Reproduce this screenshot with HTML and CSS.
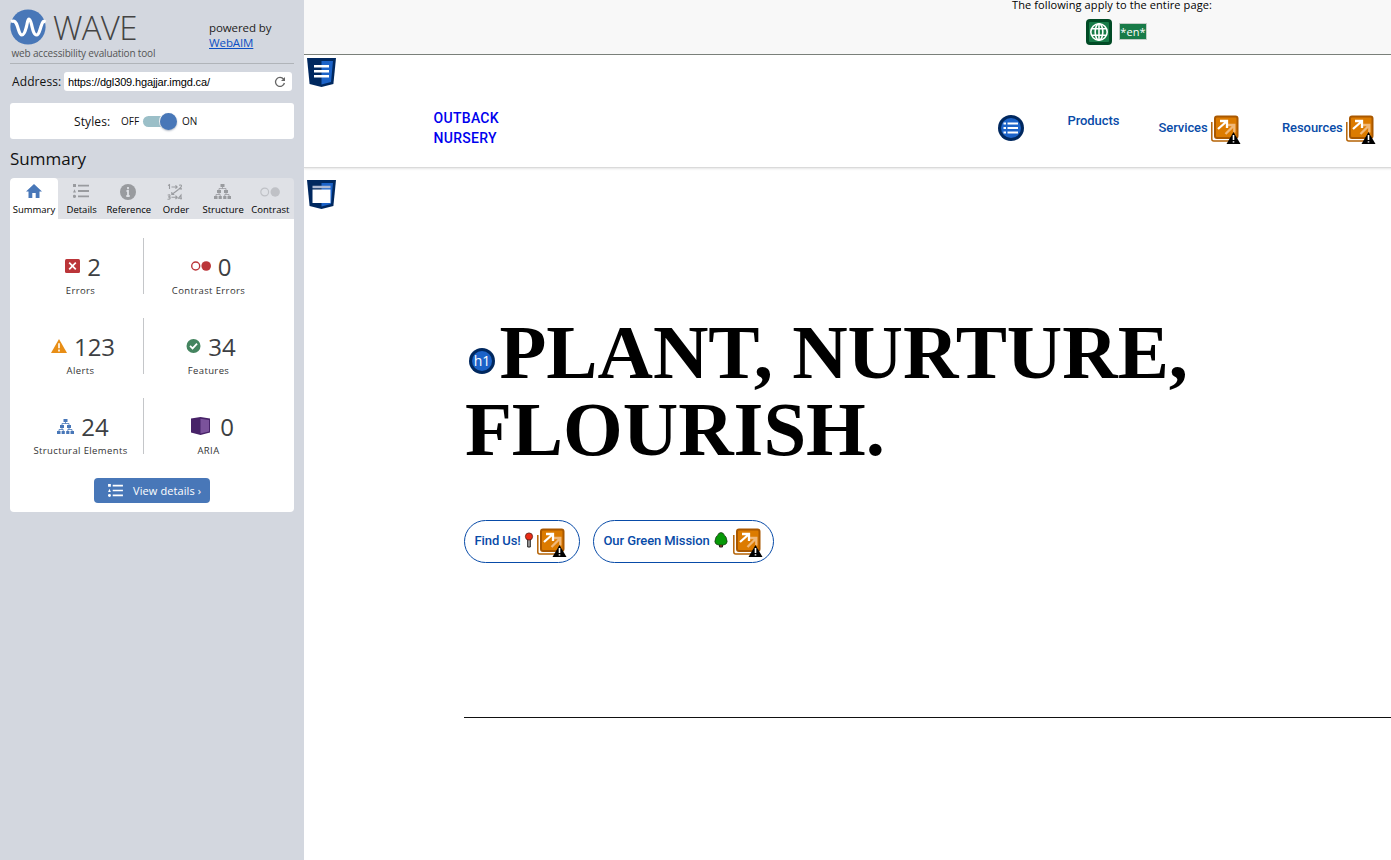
FILE: index.html
```html
<!DOCTYPE html>
<html lang="en">
<head>
<meta charset="utf-8">
<title>WAVE Report</title>
<link rel="stylesheet" href="styles.css">
</head>
<body>
<svg class="defs" aria-hidden="true">
  <symbol id="list" viewBox="0 0 16 14">
    <path d="M0 0h3v3H0zM0 8.5 1.5 5.2 3 8.5zM5 .8h11v1.8H5zM5 6.1h11v1.8H5zM5 11.4h11v1.8H5z"/><circle cx="1.5" cy="12.3" r="1.6"/>
  </symbol>
  <symbol id="tree" viewBox="0 0 17 15">
    <path d="M6.5 0h4v3h-4zM3 6h4v3H3zM10 6h4v3h-4zM0 12h3.5v3H0zM4.6 12h3.2v3H4.6zM9.2 12h3.2v3H9.2zM13.5 12H17v3h-3.500z"/>
    <path d="M8.500 3v1.500M5 6V4.500h7V6M5 9v1.500M2 12v-1.500h4.200V12M12 9v1.500M10.800 12v-1.500H15V12" fill="none" stroke="currentColor" stroke-width=".8"/>
  </symbol>
  <symbol id="possible-link" viewBox="0 0 30 30">
    <path d="M.8 7v17q0 2 2 2H22" fill="none" stroke="#b56305" stroke-width="1.500"/>
    <rect x="4" y="1.500" width="22.500" height="21.500" rx="2" fill="#dc7b00" stroke="#a95800" stroke-width="2"/>
    <path d="m14.500 19 8.500-8.500M16 10h7.300v7.500" fill="none" stroke="#f0b879" stroke-width="2.300"/>
    <path d="m7 14 8.500-7.500M9 6h7v7" fill="none" stroke="#fff" stroke-width="2.300"/>
    <path d="m22.500 17 7 12h-14z" fill="#000"/>
    <path d="M22.500 20v5M22.500 26.200v1.400" stroke="#fff" stroke-width="1.600"/>
  </symbol>
  <symbol id="shield" viewBox="0 0 29 29">
    <path d="M0 0h29l-2.600 26L14.500 29 2.600 26z" fill="#00285f"/>
    <path d="M14.500 3H26l-2 21-9.500 2.500z" fill="#1c63c8"/>
  </symbol>
</svg>

<div class="app">
<aside class="sidebar">
  <header class="brand">
    <div class="brand-main">
      <div class="logo">
        <svg class="logo-mark" viewBox="0 0 36 36"><circle cx="18" cy="18" r="17.600" fill="#4877b8"/><path d="M1 12.500C4.500 11 6 13 7.500 17.500S9.500 26 12 26s3.500-5 4.500-8.500S17.500 10 19 10s2 3.500 3 7.500 2 8.500 4.500 8.500 3-4 4.500-8.500 2-6 4.500-4.500" fill="none" stroke="#fff" stroke-width="3.200"/></svg>
        <span class="logo-word">WAVE</span>
      </div>
      <div class="tagline">web accessibility evaluation tool</div>
    </div>
    <div class="powered">powered by<br><a>WebAIM</a></div>
  </header>
  <div class="address">
    <span class="address-label">Address:</span>
    <div class="address-field"><span>https://dgl309.hgajjar.imgd.ca/</span>
      <svg class="reload" viewBox="0 0 12 12"><path d="M9.600 3.200A4.500 4.500 0 1 0 10.400 7" fill="none" stroke="#666" stroke-width="1.300"/><path d="M11 1v4H7z" fill="#666"/></svg>
    </div>
  </div>
  <div class="styles-box">
    <span class="styles-label">Styles:</span><span class="off">OFF</span><span class="toggle"><i class="knob"></i></span><span class="on">ON</span>
  </div>
  <h2 class="panel-title">Summary</h2>
  <nav class="tabs">
    <div class="tab tab-active"><svg class="tab-icon home" viewBox="0 0 16 14"><path d="M8 0 16 7.500h-2.500V14H9.700V9H6.300v5H2.500V7.500H0z"/></svg><span class="t-summary">Summary</span></div>
    <div class="tab"><svg class="tab-icon list-icon"><use href="#list"/></svg><span class="t-details">Details</span></div>
    <div class="tab"><svg class="tab-icon info" viewBox="0 0 16 16"><circle cx="8" cy="8" r="8"/><path d="M8 3v2.300M6.500 7H8v5M6.300 12h3.400" fill="none" stroke="#dfe1e6" stroke-width="1.800"/></svg><span class="t-reference">Reference</span></div>
    <div class="tab"><svg class="tab-icon order" viewBox="0 0 16 16"><g fill="none" stroke="currentColor" stroke-width="1.100"><path d="M1 1.500 2.500.700V5M12 1.300q2.500-1 2.500.800Q14.500 3 12 4.900h3M.700 11.200q2.300-1 2.300.500t-1.800 1.200q2.200 0 2 1.300t-2.700 1M14 15.500V11l-2.500 3.200H15M4.500 3h5.500M8.500 1.300 10.200 3 8.500 4.700M4.500 13.300h5.500M8.500 11.600l1.700 1.700-1.700 1.700M11.500 5.500 4.800 10.500M4.800 8v2.500h2.500"/></g></svg><span class="t-order">Order</span></div>
    <div class="tab"><svg class="tab-icon tree-icon"><use href="#tree"/></svg><span class="t-structure">Structure</span></div>
    <div class="tab"><svg class="tab-icon contrast" viewBox="0 0 20 10"><circle cx="4.700" cy="5" r="3.900" fill="none" stroke="#bfc1c6" stroke-width="1.200"/><circle cx="15.200" cy="5" r="4.700" fill="#bfc1c6"/></svg><span class="t-contrast">Contrast</span></div>
  </nav>
  <section class="panel">
    <div class="stats">
      <div class="stat"><div class="figure"><svg class="i-error" viewBox="0 0 15 14"><rect width="15" height="14" rx="1.500" fill="#bb3539"/><path d="m4.200 3.700 6.600 6.600m0-6.600-6.600 6.600" stroke="#fff" stroke-width="1.700"/></svg><b>2</b></div><div class="label">Errors</div></div>
      <div class="stat"><div class="figure"><svg class="i-contrast" viewBox="0 0 20 10"><circle cx="4.700" cy="5" r="4" fill="none" stroke="#bb3539" stroke-width="1.400"/><circle cx="15.200" cy="5" r="4.800" fill="#bb3539"/></svg><b>0</b></div><div class="label">Contrast Errors</div></div>
      <div class="stat"><div class="figure"><svg class="i-alert" viewBox="0 0 16 14"><path d="m8 0 8 14H0z" fill="#e88e16"/><path d="M8 4.200v5M8 10.500v2" stroke="#fff" stroke-width="1.600"/></svg><b>123</b></div><div class="label">Alerts</div></div>
      <div class="stat"><div class="figure"><svg class="i-feature" viewBox="0 0 15 15"><circle cx="7.500" cy="7.500" r="7.500" fill="#44845f"/><path d="m3.800 7.400 2.700 2.700L11.300 5" fill="none" stroke="#fff" stroke-width="1.900"/></svg><b>34</b></div><div class="label">Features</div></div>
      <div class="stat"><div class="figure"><svg class="i-tree"><use href="#tree"/></svg><b>24</b></div><div class="label">Structural Elements</div></div>
      <div class="stat"><div class="figure figure-aria"><svg class="i-aria" viewBox="0 0 19 18"><path d="M0 1.500 9.500 0 19 1.500v14L9.500 18 0 15.500z" fill="#472268"/><path d="M9.500 1.800 18 3v11.500l-8.500 2z" fill="#7b529b"/></svg><b>0</b></div><div class="label">ARIA</div></div>
    </div>
    <div class="details-button"><svg class="button-icon"><use href="#list"/></svg><span>View details ›</span></div>
  </section>
</aside>

<div class="viewport">
 <div class="page">
  <div class="page-notes">
    <div class="notes-title">The following apply to the entire page:</div>
    <div class="notes-row">
      <svg class="globe" viewBox="0 0 26 26"><rect width="26" height="26" rx="4" fill="#004a25"/><rect x="3" y="3" width="20" height="20" rx="1" fill="#187b48"/><g fill="none" stroke="#fff" stroke-width="1.600"><circle cx="13" cy="13" r="8.200"/><ellipse cx="13" cy="13" rx="3.800" ry="8.200"/><path d="M13 5v16M5.500 9.700h15M5.500 16.300h15"/></g></svg>
      <span class="lang">*en*</span>
    </div>
  </div>
  <header class="site-header">
    <svg class="region-icon" viewBox="0 0 29 29"><use href="#shield"/><path d="M7 8.300h15M7 13.300h15M7 18.300h15" stroke="#fff" stroke-width="2.600"/></svg>
    <div class="site-name">OUTBACK<br>NURSERY</div>
    <nav class="site-nav">
      <svg class="list-badge" viewBox="0 0 26 26"><circle cx="13" cy="13" r="13" fill="#00285f"/><circle cx="13" cy="13" r="10" fill="#1c63c8"/><path d="M5.500 8.400H8M5.500 13H8M5.500 17.600H8M9.500 8.400H20M9.500 13H20M9.500 17.600H20" stroke="#fff" stroke-width="2"/></svg>
      <a class="products">Products</a>
      <a class="services"><span>Services</span><svg class="link-icon"><use href="#possible-link"/></svg></a>
      <a class="resources"><span>Resources</span><svg class="link-icon"><use href="#possible-link"/></svg></a>
    </nav>
  </header>
  <main class="site-main">
    <svg class="region-icon" viewBox="0 0 29 29"><use href="#shield"/><path d="M5.500 7h18" stroke="#aeb9d2" stroke-width="2.500"/><path d="M5.500 9.500h18V23h-18z" fill="#fff"/></svg>
    <section class="hero">
      <h1><svg class="h1-badge" viewBox="0 0 26 26"><circle cx="13" cy="13" r="13" fill="#00285f"/><circle cx="13" cy="13" r="10" fill="#1c63c8"/><text class="badge-text" x="13" y="18" text-anchor="middle">h1</text></svg><span>PLANT, NURTURE,</span><br><span>FLOURISH.</span></h1>
      <div class="actions">
        <a class="pill find"><span>Find Us!</span><svg class="pin" viewBox="0 0 10 16"><path d="M3.700 7h2.600v8H3.700z" fill="#aaa" stroke="#222"/><circle cx="5" cy="4.500" r="3.600" fill="#e92c16" stroke="#5c1c12" stroke-width=".8"/></svg><svg class="link-icon"><use href="#possible-link"/></svg></a>
        <a class="pill mission"><span>Our Green Mission</span><svg class="leafy" viewBox="0 0 14 16"><path d="M5.500 10h3v5h-3z" fill="#a63b18" stroke="#222"/><path d="M7 .6q2.500 0 3.500 2.800 2 1.500 2 3.600 1.500 3-.5 5l-2.500 1h-5L2 12q-2-2-.5-5 0-2.100 2-3.600Q4.500.6 7 .6z" fill="#079907" stroke="#173b12" stroke-width=".8"/></svg><svg class="link-icon"><use href="#possible-link"/></svg></a>
      </div>
    </section>
  </main>
 </div>
</div>
</div>
</body>
</html>
```

FILE: styles.css
```css
* { box-sizing: border-box; }
body { margin: 0; font-family: "Open Sans", sans-serif; color: #111; background: #fff; overflow: hidden; }
svg { display: block; flex: none; overflow: visible; }
span { white-space: nowrap; }
.defs { position: absolute; width: 0; height: 0; }
.app { display: flex; height: 860px; }
.sidebar { flex: none; width: 304px; padding: 0 10px; background: #d3d7df; }
.brand { display: flex; justify-content: space-between; height: 64px; border-bottom: 1px solid #b0b4b9; }
.brand-main { padding-top: 8px; }
.logo { display: flex; height: 37px; gap: 7px; align-items: center; }
.logo-mark { width: 36px; height: 36px; }
.logo-word { padding-top: 2px; font-size: 33px; font-weight: 300; line-height: 37px; color: #444; letter-spacing: -.7px; }
.tagline { padding-left: 1.500px; font-size: 10px; line-height: 17px; color: #555; letter-spacing: -.160px; white-space: nowrap; }
.powered { width: 85px; padding-top: 20px; font-size: 11.500px; line-height: 15px; letter-spacing: -.1px; color: #222; }
.powered a { color: #0b4fc4; text-decoration: underline; }
.address { display: flex; align-items: center; height: 19px; margin-top: 8px; padding: 0 2px; }
.address-label { width: 52px; font-size: 12px; line-height: 19px; letter-spacing: .1px; }
.address-field { display: flex; align-items: center; justify-content: space-between; flex: 1; height: 19px; padding: 1px 6px 0 4px; background: #fff; border-radius: 3px; font: 11px/19px "Liberation Sans", sans-serif; letter-spacing: -.140px; color: #000; }
.reload { width: 12px; height: 12px; }
.styles-box { display: flex; align-items: center; height: 36px; margin-top: 12px; padding-left: 64px; background: #fff; border-radius: 3px; }
.styles-label { width: 47px; font-size: 12px; letter-spacing: .1px; }
.off { width: 22px; font-size: 10px; }
.toggle { display: flex; align-items: center; justify-content: flex-end; width: 34px; height: 11px; border-radius: 6px; background: linear-gradient(to right, #9bbfc8 28px, transparent 28px); }
.knob { width: 17px; height: 17px; border-radius: 50%; background: #4877b8; box-shadow: 0 1px 2px #aab3c0, 0 0 0 1px #fff; }
.on { margin-left: 5px; font-size: 10px; }
.panel-title { margin: 8px 0 7px; font-size: 17px; font-weight: 400; line-height: 24px; }
.tabs { display: grid; grid-template-columns: 48px repeat(5, 47.200px); height: 41px; border-radius: 4px 4px 0 0; background: #dfe1e6; overflow: hidden; color: #999b9f; }
.tab { display: flex; flex-direction: column; align-items: center; height: 41px; }
.tab svg { position: relative; left: -.500px; }
.tab span { margin-top: auto; height: 18px; font-size: 9.500px; line-height: 18px; color: #000; }
.tab-active { background: #fff; border-radius: 4px 4px 0 0; }
.tab-icon, .i-tree, .button-icon { fill: currentColor; }
.home { width: 16px; height: 14px; margin-top: 6px; color: #4877b8; }
.list-icon { width: 16px; height: 14px; margin-top: 6px; }
.info { width: 16px; height: 16px; margin-top: 6px; }
.order { width: 16px; height: 16px; margin-top: 6px; }
.tree-icon { width: 17px; height: 15px; margin-top: 6px; }
.contrast { width: 20px; height: 10px; margin-top: 9px; }
.panel { height: 293px; padding-top: 19px; border-radius: 0 0 4px 4px; background: #fff; }
.stats { display: grid; grid-template-columns: 126px 129px; grid-auto-rows: 56px; row-gap: 24px; padding-left: 8px; }
.stat:nth-child(odd) { border-right: 1px solid #c4c6c9; }
.figure { display: flex; align-items: flex-start; justify-content: center; height: 46px; padding: 12px 0 0 5px; color: #4877b8; }
.figure-aria { padding-left: 8px; }
.figure b { font-size: 24px; line-height: 34px; font-weight: 400; color: #3d3f43; }
.label { text-align: center; font-size: 9.500px; line-height: 13px; letter-spacing: .380px; color: #333; white-space: nowrap; }
.i-error { width: 15px; height: 14px; margin: 9px 7px 0 0; }
.i-contrast { width: 20px; height: 10px; margin: 11px 7px 0 0; }
.i-alert { width: 16px; height: 14px; margin: 9px 7px 0 0; }
.i-feature { width: 15px; height: 14px; margin: 9px 7px 0 0; }
.i-tree { width: 17px; height: 15px; margin: 9px 7px 0 0; }
.i-aria { width: 19px; height: 18px; margin: 7px 10px 0 0; }
.details-button { display: flex; align-items: center; gap: 10px; width: 116px; height: 25px; margin: 24px 0 0 84px; padding: 0 0 1px 14px; border-radius: 4px; background: #4877b8; color: #fff; font-size: 11px; letter-spacing: .1px; }
.button-icon { width: 15px; height: 13px; }

.viewport { flex: 1; min-width: 0; overflow: hidden; }
.page { width: 1616px; }
.page-notes { height: 55px; border-bottom: 1px solid #737973; background: #f8f8f8; }
.notes-title { height: 19px; font-size: 11px; line-height: 10px; letter-spacing: .1px; text-align: center; color: #000; }
.notes-row { display: flex; gap: 7px; padding-left: 782px; align-items: center; }
.globe { width: 26px; height: 26px; }
.lang { height: 17px; width: 28px; margin-bottom: 2px; border: 1px solid #c4cec8; background: #187b48; color: #fff; font-size: 11px; line-height: 15px; letter-spacing: .1px; text-align: center; }
.site-header { display: flex; height: 113px; padding: 3px; border-bottom: 1px solid #dadada; box-shadow: 0 1px 2px #e5e5e5; font-family: Roboto, sans-serif; font-weight: 500; }
.region-icon { width: 29px; height: 29px; }
.site-name { width: 564px; margin-left: 97.500px; padding-top: 50px; font-size: 14px; line-height: 20px; letter-spacing: .3px; color: #00e; }
.site-nav { display: flex; flex: none; align-items: flex-start; padding-top: 57px; font-size: 13px; line-height: 18px; letter-spacing: -.080px; color: #084ba8; }
.list-badge { width: 26px; height: 26px; }
.products { width: 91px; margin: -3px 0 0 44px; }
.services, .resources { display: flex; }
.services { width: 123.500px; }
.services span, .resources span { margin-top: 4px; }
.services span { width: 52.500px; }
.resources span { width: 64px; }
.link-icon { width: 30px; height: 30px; }
.site-main { padding: 12px 3px 0; }
.hero { width: 1136px; height: 509px; margin-left: 157px; border-bottom: 1px solid #111; }
h1 { margin: 0; padding: 106px 0 0 1px; font: 700 76.800px/76.800px "Liberation Serif", serif; color: #000; white-space: nowrap; }
h1 span { letter-spacing: -.050px; }
.h1-badge { display: inline-block; width: 26px; height: 26px; margin: 0 5px 0 3.500px; vertical-align: 4px; }
.badge-text { font: 400 14px "Open Sans", sans-serif; fill: #fff; }
.actions { display: flex; gap: 13px; margin-top: 51px; font: 500 13px/18px Roboto, sans-serif; letter-spacing: -.090px; color: #084ba8; }
.pill { display: flex; height: 43px; border: 1px solid #084ba8; border-radius: 22px; padding: 7px 0 0 9.500px; }
.find { width: 116px; }
.mission { width: 181px; }
.pill span { margin-top: 4px; }
.find span { width: 49.500px; }
.mission span { width: 110px; }
.pill .link-icon { margin-left: 3px; }
.mission .link-icon { margin-left: 5px; }
.pin { width: 10px; height: 16px; margin-top: 4px; }
.leafy { width: 14px; height: 16px; margin-top: 4px; }
```
